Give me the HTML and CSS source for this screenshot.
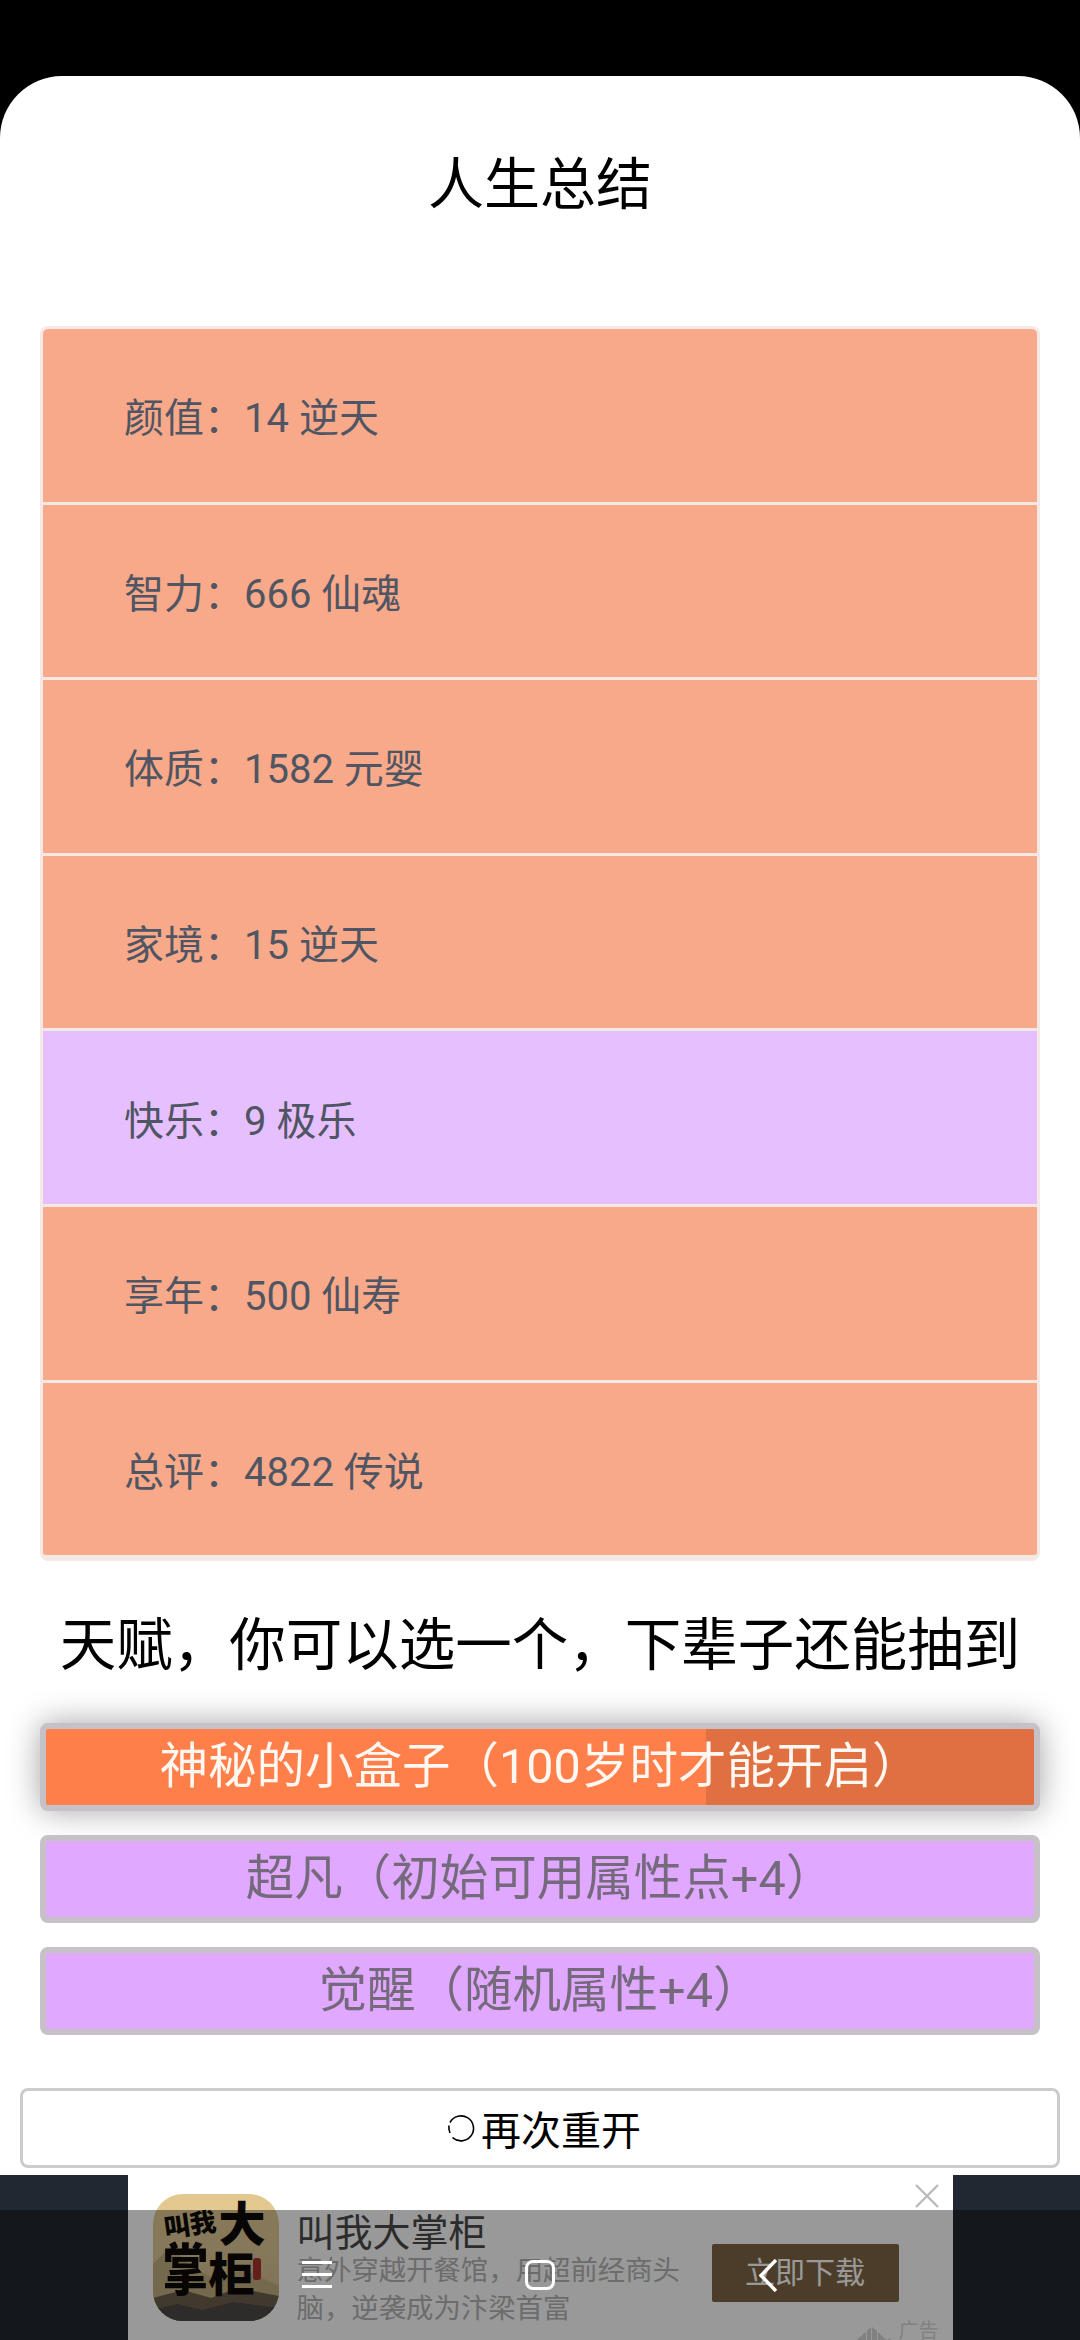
FILE: index.html
```html
<!DOCTYPE html>
<html lang="zh">
<head>
  <meta charset="UTF-8" />
  <meta name="viewport" content="width=device-width, initial-scale=1" />
  <title>人生总结</title>
  <link rel="stylesheet" href="styles.css">
</head>
<body>
  <div class="card">
    <h1 class="title">人生总结</h1>

    <!-- Property summary -->
    <ul class="summary">
      <li class="row">颜值：14 逆天</li>
      <li class="row">智力：666 仙魂</li>
      <li class="row">体质：1582 元婴</li>
      <li class="row">家境：15 逆天</li>
      <li class="row row-purple">快乐：9 极乐</li>
      <li class="row">享年：500 仙寿</li>
      <li class="row">总评：4822 传说</li>
    </ul>

    <h2 class="subtitle">天赋，你可以选一个，下辈子还能抽到</h2>

    <!-- Talents -->
    <div class="talents">
      <div class="talent talent-picked">
        <span class="talent-progress"></span>
        <span class="talent-label">神秘的小盒子（100岁时才能开启）</span>
      </div>
      <div class="talent">超凡（初始可用属性点+4）</div>
      <div class="talent">觉醒（随机属性+4）</div>
    </div>

    <div class="restart">
      <svg class="restart-icon" viewBox="0 0 29 29" fill="none" stroke="#000" stroke-width="1.6">
        <path d="M3 8.5A12.5 12.5 0 1 1 5.5 23.5" />
        <path d="M2 11.5A12.5 12.5 0 0 0 3 19" />
      </svg>
      <span>再次重开</span>
    </div>
  </div>

  <!-- Ad banner -->
  <div class="ad-band">
    <div class="ad">
      <div class="ad-icon">
        <svg class="ad-hills" viewBox="0 0 126 127" preserveAspectRatio="none">
          <path d="M0 70L18 52L38 72L60 84L92 76L126 92V127H0Z" fill="#c2ad80" />
          <path d="M0 104L30 96L58 104L84 94L126 102V127H0Z" fill="#6d5f4c" />
          <path d="M0 116L24 110L50 116L80 108L126 114V127H0Z" fill="#4c4a48" />
        </svg>
        <span class="ad-logo ad-logo-small">叫我</span>
        <span class="ad-logo ad-logo-da">大</span>
        <span class="ad-logo ad-logo-zhang">掌</span>
        <span class="ad-logo ad-logo-gui">柜</span>
        <span class="ad-seal"></span>
      </div>
      <div class="ad-text">
        <div class="ad-name">叫我大掌柜</div>
        <div class="ad-desc">意外穿越开餐馆，用超前经商头脑，逆袭成为汴梁首富</div>
      </div>
      <div class="ad-button">立即下载</div>
      <svg class="ad-close" viewBox="0 0 24 24" stroke="#bbb" stroke-width="2.4">
        <path d="M1 1L23 23M23 1L1 23" />
      </svg>
      <div class="ad-mark">
        <svg class="ad-mark-logo" viewBox="0 0 38 18" fill="#d8d8d8">
          <path d="M0 16L12 6V16ZM13 5L17 1V16H13ZM18 1L23 5V16H18ZM24 6L32 14L38 12L33 17H24Z" />
        </svg>
        <span>广告</span>
      </div>
    </div>
  </div>

  <!-- Translucent system navigation -->
  <div class="nav-scrim">
    <div class="nav-menu"><span></span><span></span><span></span></div>
    <div class="nav-home"></div>
    <svg class="nav-back" viewBox="0 0 18 33" fill="none" stroke="#fff" stroke-width="3.5">
      <path d="M17 1L2 16.5L17 32" />
    </svg>
  </div>
</body>
</html>
```

FILE: styles.css
```css
* { box-sizing: border-box; }

body {
  position: relative;
  width: 1080px;
  height: 2340px;
  margin: 0;
  padding-top: 76px;
  overflow: hidden;
  background: #000;
  color: #000;
  font-family: Roboto, "Noto Sans CJK SC", sans-serif;
}

.card {
  height: 2099px;
  padding-top: 69px;
  background: #fff;
  border-radius: 62px 62px 0 0;
}

.title {
  margin: 0 0 101px;
  font-size: 56px;
  font-weight: 400;
  line-height: 80px;
  text-align: center;
}

.summary {
  margin: 0 40px;
  padding: 0;
  list-style: none;
  background: #f4e9e5;
  border: 3px solid #f4e9e5;
  border-bottom-width: 6px;
  border-radius: 8px;
  overflow: hidden;
}

.row {
  display: flex;
  align-items: center;
  height: 172.6px;
  margin-bottom: 3px;
  padding-left: 81px;
  background: #f7a98a;
  color: #4f5562;
  font-size: 40px;
}

.row:last-child { margin-bottom: 0; }

.row-purple { background: #e6bfff; }

.subtitle {
  margin: 45px 0 37px;
  font-size: 56.5px;
  font-weight: 400;
  line-height: 80px;
  text-align: center;
}

.talents {
  display: flex;
  flex-direction: column;
  gap: 24px;
  margin: 0 40px;
}

.talent {
  position: relative;
  height: 88px;
  overflow: hidden;
  background: #e0a8ff;
  border: 6px solid #c5c1c6;
  border-radius: 8px;
  color: #746a7c;
  font-size: 48.5px;
  line-height: 76px;
  text-align: center;
}

.talent-picked {
  overflow: visible;
  background: #ff7f4b;
  color: #fff8f2;
  box-shadow: 0 0 32px rgba(0, 0, 0, 0.36);
}

.talent-label { position: relative; }

.talent-progress {
  position: absolute;
  top: 0;
  right: 0;
  bottom: 0;
  width: 328px;
  background: rgba(0, 0, 0, 0.12);
}

.restart {
  display: flex;
  justify-content: center;
  align-items: center;
  height: 80px;
  margin: 53px 20px 0;
  padding-left: 8px;
  border: 3px solid #ccc;
  border-radius: 8px;
  font-size: 40px;
}

.restart-icon {
  width: 29px;
  height: 29px;
  margin-right: 5px;
}

.ad-band {
  display: flex;
  justify-content: center;
  height: 165px;
  background: #222831;
}

.ad {
  position: relative;
  display: flex;
  width: 825px;
  height: 169px;
  margin-top: -4px;
  padding: 23px 0 0 25px;
  background: #fff;
  overflow: hidden;
}

.ad-icon {
  position: relative;
  flex: none;
  width: 126px;
  height: 127px;
  overflow: hidden;
  background: linear-gradient(#e3c88f, #e0c898 45%, #cdb78c);
  border-radius: 30px;
}

.ad-hills {
  position: absolute;
  left: 0;
  top: 0;
  width: 100%;
  height: 100%;
}

.ad-logo {
  position: absolute;
  color: #0c0a08;
  font-weight: 900;
  line-height: 1;
}

.ad-logo-small { left: 11px; top: 18px; font-size: 26px; transform: rotate(-8deg); }
.ad-logo-da { left: 66px; top: 7px; font-size: 47px; }
.ad-logo-zhang { left: 10px; top: 54px; font-size: 46px; transform: scaleY(1.2); }
.ad-logo-gui { left: 56px; top: 58px; font-size: 46px; }

.ad-seal {
  position: absolute;
  left: 100px;
  top: 64px;
  width: 8px;
  height: 22px;
  background: #a8342c;
  border-radius: 3px;
}

.ad-text {
  width: 396px;
  margin: 16px 0 0 18px;
}

.ad-name {
  color: #4a4a4a;
  font-size: 38px;
  line-height: 46px;
}

.ad-desc {
  margin-top: -4px;
  color: #b5b5b5;
  font-size: 27.4px;
  line-height: 38px;
}

.ad-button {
  flex: none;
  width: 187px;
  height: 58px;
  margin: 50px 0 0 19px;
  background: #7f6646;
  border-radius: 2px;
  color: #fff;
  font-size: 30px;
  line-height: 58px;
  text-align: center;
}

.ad-close {
  position: absolute;
  right: 14px;
  top: 13px;
  width: 24px;
  height: 24px;
}

.ad-mark {
  position: absolute;
  right: 14px;
  top: 147px;
  display: flex;
  align-items: flex-start;
  gap: 7px;
  color: #d8d8d8;
  font-size: 20px;
  line-height: 26px;
}

.ad-mark-logo {
  width: 38px;
  height: 18px;
  margin-top: 8px;
}

.nav-scrim {
  position: absolute;
  left: 0;
  top: 2210px;
  width: 1080px;
  height: 130px;
  background: rgba(0, 0, 0, 0.4);
}

.nav-menu {
  position: absolute;
  left: 302px;
  top: 51px;
  display: flex;
  flex-direction: column;
  gap: 9px;
  width: 30px;
}

.nav-menu span {
  height: 3px;
  background: #fff;
}

.nav-home {
  position: absolute;
  left: 525px;
  top: 50px;
  width: 30px;
  height: 30px;
  border: 3.5px solid #fff;
  border-radius: 8px;
}

.nav-back {
  position: absolute;
  left: 759px;
  top: 49px;
  width: 18px;
  height: 33px;
}
```
